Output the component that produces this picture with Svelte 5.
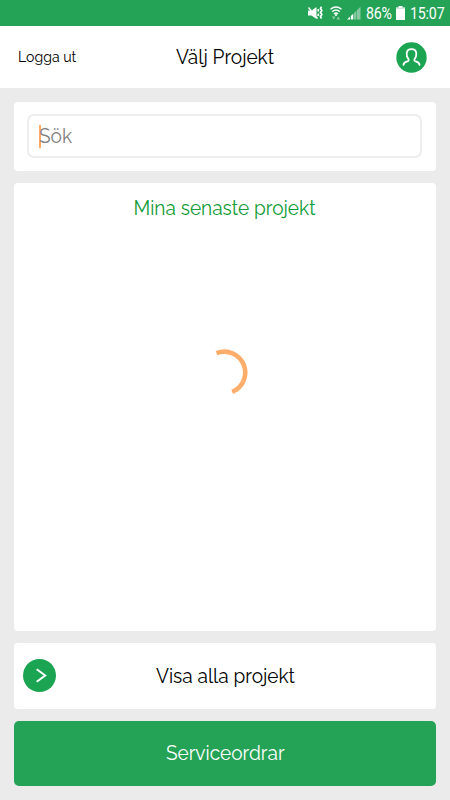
<script lang="ts">
  const battery = 86;
  const time = '15:07';
  let query = '';
</script>

<div class="screen">
  <div class="status">
    <svg class="mute" viewBox="0 0 15 14" aria-hidden="true">
      <path d="M0 4.500h3.500L8.500 1v12L3.500 9.500H0z" fill="#fff" />
      <path d="M1.800 1.200l2.500 3" stroke="#24a256" stroke-width="1" />
      <path d="M.5 1.500l9 11" stroke="#fff" stroke-width="1.500" />
      <path d="M10.300 3v2.500M10.300 7.500V10M13.500 .8l-1 1.700 1.300 2-1.300 2 1.300 2-1.300 2 1 2" fill="none" stroke="#fff" stroke-width="1.700" />
    </svg>
    <svg class="wifi" viewBox="0 0 14 14" aria-hidden="true">
      <path d="M1.500 3.300q5.500-4.500 11 0M3.200 5.700q3.800-3.200 7.600 0M5 8q2-1.800 4 0" fill="none" stroke="#fff" stroke-width="1.400" />
      <path d="M7 8v2" stroke="#fff" stroke-width="1.600" />
      <path d="M3 10.500h3.500L4.700 13.500zM7.500 13.500H11L9.300 10.500z" fill="#8dcea7" />
    </svg>
    <svg class="signal" viewBox="0 0 14 14" aria-hidden="true">
      <path d="M0 13.500L3 10.800v2.700zM3.800 10L6.300 7.700v5.800H3.800z" fill="#fff" />
      <path d="M7 7L9.500 4.500v9H7zM10 4L13.500.8v12.700H10z" fill="#84c9a0" />
    </svg>
    <span class="percent">{battery}%</span>
    <svg class="battery" viewBox="0 0 9 14" aria-hidden="true">
      <path d="M2.500 0h4v1.500H9V14H0V1.500h2.500z" fill="#fff" />
      <path d="M0 2.200h9" stroke="#b8e0c8" stroke-width="1" />
    </svg>
    <span class="time">{time}</span>
  </div>

  <header>
    <span class="logout">Logga ut</span>
    <h1>Välj Projekt</h1>
    <svg class="avatar" viewBox="0 0 31 31" aria-hidden="true">
      <circle cx="15.500" cy="15.500" r="15.200" fill="#1ba552" />
      <path d="M7.500 22.800c.2-2 1.400-2.600 3.200-3.100 1.700-.5 2.400-1.200 1.700-2.700-1.500-1.800-1.900-3.500-1.700-5.600.2-2.700 2.100-4.200 4.800-4.200s4.600 1.500 4.800 4.200c.2 2.100-.2 3.800-1.700 5.600-.7 1.500 0 2.200 1.700 2.700 1.800.5 3 1.100 3.200 3.100" />
    </svg>
  </header>

  <main>
    <section class="card search">
      <div class="field">
        <span class="caret"></span>
        <span class="placeholder">{query || 'Sök'}</span>
      </div>
    </section>

    <section class="card recent">
      <h2>Mina senaste projekt</h2>
      <svg class="spinner" viewBox="0 0 48 48" aria-hidden="true">
        <path d="M15.500 5.200A20.700 20.700 0 0 1 31.200 43.900" />
      </svg>
    </section>

    <div class="card all">
      <svg class="arrow" viewBox="0 0 33 33" aria-hidden="true">
        <circle cx="16.500" cy="16.500" r="16.500" fill="#1ba552" />
        <path d="M13.700 10.300l8.500 6.200-8.500 6.200" />
      </svg>
      <span class="label">Visa alla projekt</span>
    </div>

    <div class="service"><span class="label">Serviceordrar</span></div>
  </main>
</div>

<style>
  :global(body) { background: #ebebeb; }
  .screen {
    display: flex;
    flex-direction: column;
    width: 450px;
    height: 800px;
    overflow: hidden;
    box-sizing: border-box;
    background: #ebebeb;
    color: #000;
    font-family: Raleway, Lato, sans-serif;
  }
  .status {
    display: flex;
    flex: none;
    align-items: center;
    justify-content: flex-end;
    height: 26px;
    padding-right: 6px;
    box-sizing: border-box;
    background: #24a256;
    color: #fff;
    font: 16.500px/26px Roboto, sans-serif;
    white-space: nowrap;
  }
  .status span { padding-top: 2px; transform: scaleX(.86); transform-origin: left; }
  .mute { width: 15px; height: 14px; margin-right: 6px; }
  .wifi { width: 14px; height: 14px; margin-right: 4px; }
  .signal { width: 14px; height: 14px; margin-right: 5px; }
  .percent { width: 26px; margin-right: 4px; letter-spacing: -.3px; }
  .battery { width: 9px; height: 14px; margin-right: 5px; }
  .time { width: 34px; letter-spacing: -.2px; }

  header {
    display: grid;
    flex: none;
    grid-template-columns: 100px 1fr 100px;
    align-items: center;
    height: 61.500px;
    padding: 0 18px;
    box-sizing: border-box;
    background: #fff;
  }
  .logout { font-size: 15px; transform: scaleX(.94); transform-origin: left; }
  h1, h2 { margin: 0; font-weight: 400; text-align: center; }
  h1, h2, .label { font-size: 20px; transform: scaleX(.953); }
  .avatar { width: 31px; height: 31px; justify-self: end; margin: 1px 5px 0 0; }
  .avatar path { fill: none; stroke: #fff; stroke-width: 1.800; stroke-linecap: round; }

  main {
    display: flex;
    flex: 1;
    flex-direction: column;
    gap: 12px;
    padding: 14px;
    box-sizing: border-box;
  }
  .card { background: #fff; border-radius: 4px; box-sizing: border-box; }
  .search { height: 69.500px; padding: 12.500px 14px 13px 13px; }
  .field {
    display: flex;
    align-items: center;
    height: 44px;
    padding-left: 10px;
    border: 2px solid #eee;
    border-radius: 7px;
    box-sizing: border-box;
  }
  .caret { width: 2px; height: 23px; margin-right: -2px; background: #ffab66; }
  .placeholder { color: #808080; font-size: 20px; transform: scaleX(.953); transform-origin: left; }
  .recent {
    display: flex;
    flex-direction: column;
    align-items: center;
    height: 448px;
    padding-top: 12.500px;
  }
  h2 { color: #109b35; line-height: 25px; }
  .spinner { width: 48px; height: 48px; margin-top: 127px; }
  .spinner path { fill: none; stroke: #ffad6b; stroke-width: 4.600; }
  .all {
    display: grid;
    grid-template-columns: 33px 1fr 33px;
    align-items: center;
    height: 65.500px;
    padding: 0 8.500px;
    text-align: center;
  }
  .arrow { width: 33px; height: 33px; }
  .arrow path { fill: none; stroke: #fff; stroke-width: 2; }
  .service {
    display: flex;
    align-items: center;
    justify-content: center;
    height: 65.500px;
    border-radius: 5px;
    background: #24a256;
    color: #fff;
  }
</style>
